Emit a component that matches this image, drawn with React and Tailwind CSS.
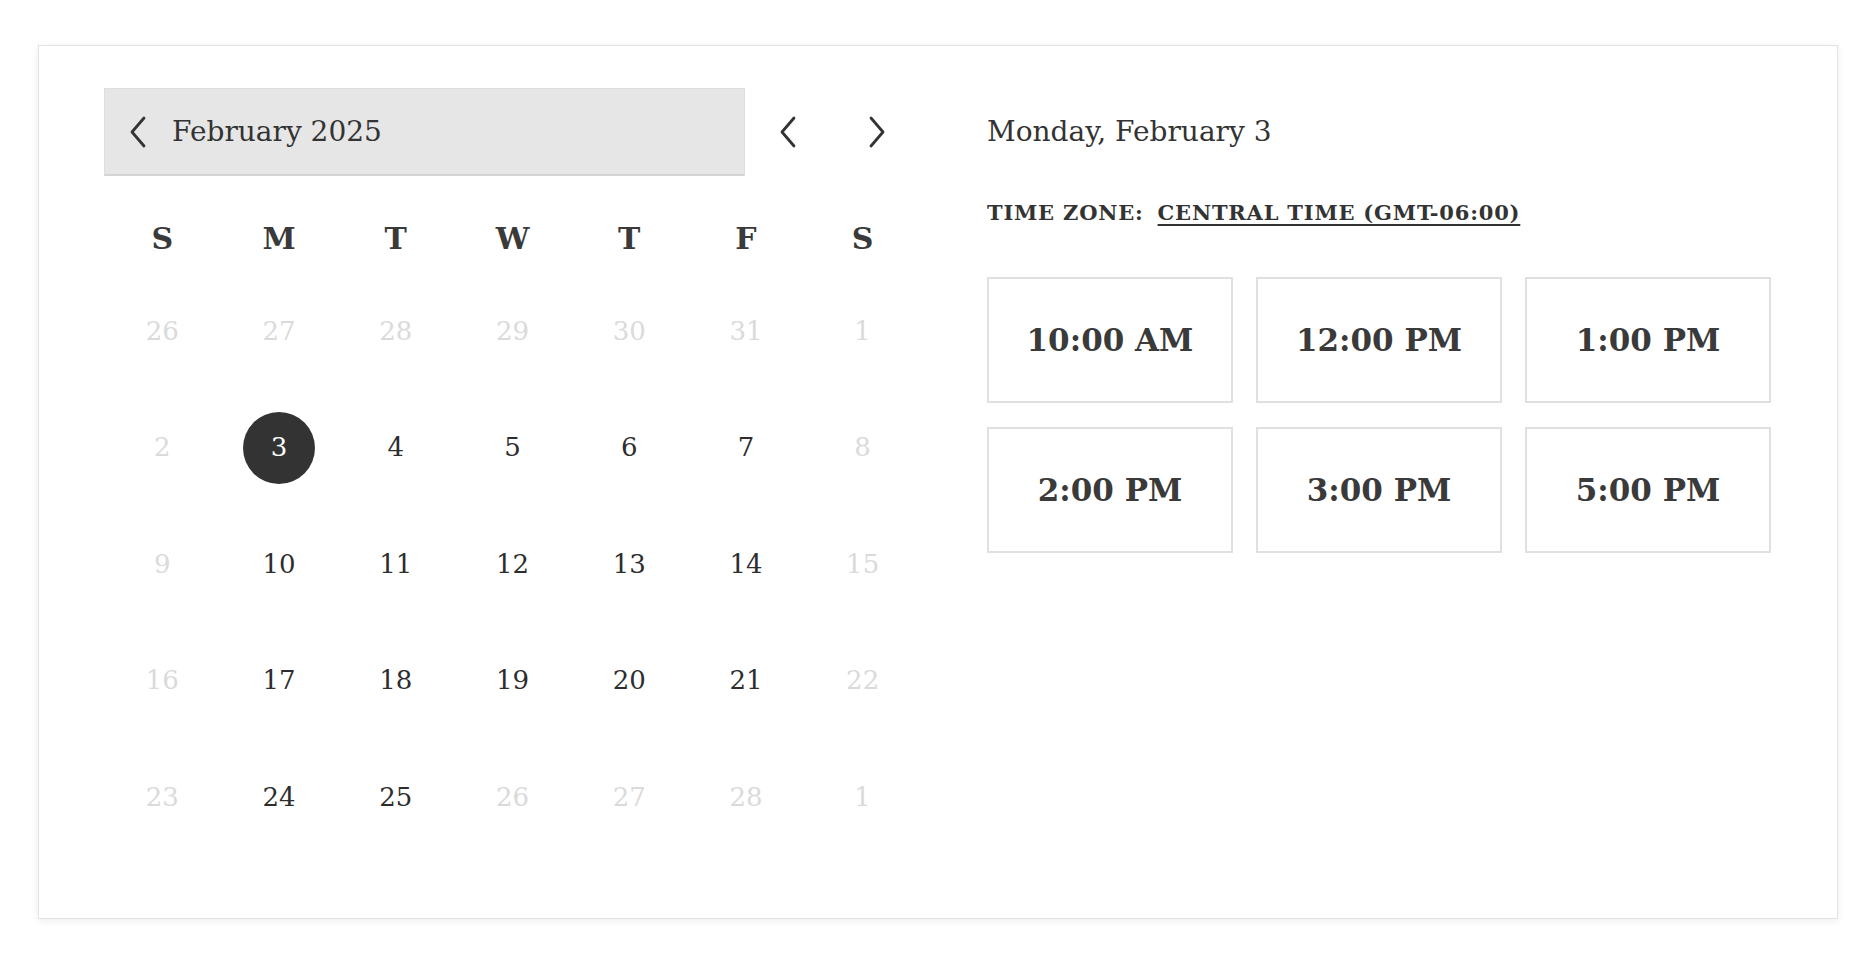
import React from 'react';

const serif = { fontFamily: '"DejaVu Serif", "Liberation Serif", serif' };

function Chevron({ dir = 'left', className = '' }) {
  const d = dir === 'left' ? 'M15 2 L3 16 L15 30' : 'M3 2 L15 16 L3 30';
  return (
    <svg viewBox="0 0 18 32" className={className} fill="none" stroke="#333" strokeWidth="2.8" strokeLinecap="round" strokeLinejoin="round">
      <path d={d} />
    </svg>
  );
}

const weekdays = ['S', 'M', 'T', 'W', 'T', 'F', 'S'];

// each cell: [day, inMonth]
const weeks = [
  [[26, 0], [27, 0], [28, 0], [29, 0], [30, 0], [31, 0], [1, 0]],
  [[2, 0], [3, 1], [4, 1], [5, 1], [6, 1], [7, 1], [8, 0]],
  [[9, 0], [10, 1], [11, 1], [12, 1], [13, 1], [14, 1], [15, 0]],
  [[16, 0], [17, 1], [18, 1], [19, 1], [20, 1], [21, 1], [22, 0]],
  [[23, 0], [24, 1], [25, 1], [26, 0], [27, 0], [28, 0], [1, 0]],
];

const slots = ['10:00 AM', '12:00 PM', '1:00 PM', '2:00 PM', '3:00 PM', '5:00 PM'];

function DayCell({ day, active, selected }) {
  if (selected) {
    return (
      <div className="h-[116.5px] flex items-center justify-center">
        <div className="w-[72px] h-[72px] rounded-full bg-[#333] text-white flex items-center justify-center text-[26px]">{day}</div>
      </div>
    );
  }
  return (
    <div className={`h-[116.5px] flex items-center justify-center text-[26px] ${active ? 'text-[#2d2d2d]' : 'text-[#dadada]'}`}>
      {day}
    </div>
  );
}

export default function App() {
  return (
    <div className="min-h-screen bg-white pt-[45px] pl-[38px]" style={serif}>
      <div className="w-[1800px] h-[874px] bg-white border border-[#e3e3e3] shadow-[0_2px_8px_rgba(0,0,0,0.07)] flex px-[65px] pt-[42px]">
        {/* Calendar */}
        <div className="w-[817px]">
          <div className="flex items-center h-[88px]">
            <div className="w-[641px] h-[88px] bg-[#e6e6e6] border border-[#dedede] border-b-2 border-b-[#d4d4d4] flex items-center pl-[24px]">
              <Chevron className="w-[18px] h-[32px]" />
              <span className="ml-[25px] text-[28px] text-[#333]">February 2025</span>
            </div>
            <button className="ml-[21px] w-[44px] h-[44px] flex items-center justify-center">
              <Chevron className="w-[18px] h-[32px]" />
            </button>
            <button className="ml-[45px] w-[44px] h-[44px] flex items-center justify-center">
              <Chevron dir="right" className="w-[18px] h-[32px]" />
            </button>
          </div>

          <div className="grid grid-cols-7 mt-[32px] h-[60px]">
            {weekdays.map((w, i) => (
              <div key={i} className="flex items-center justify-center text-[30px] font-bold text-[#3a3a3a]">{w}</div>
            ))}
          </div>

          <div className="mt-[5px]">
            {weeks.map((week, wi) => (
              <div key={wi} className="grid grid-cols-7">
                {week.map(([d, m], di) => (
                  <DayCell key={di} day={d} active={m === 1} selected={wi === 1 && di === 1} />
                ))}
              </div>
            ))}
          </div>
        </div>

        {/* Times */}
        <div className="ml-[66px] w-[785px]">
          <div className="h-[88px] flex items-center text-[28px] text-[#333]">Monday, February 3</div>
          <div className="mt-[24px] text-[21px] font-bold text-[#333] tracking-[0.8px] leading-[26px] flex">
            <span>TIME ZONE:</span>
            <span className="ml-[14px] underline decoration-2 underline-offset-[4px]">CENTRAL TIME (GMT-06:00)</span>
          </div>
          <div className="mt-[51px] grid grid-cols-[246px_246px_246px] gap-x-[23px] gap-y-[24px]">
            {slots.map((s) => (
              <div key={s} className="h-[126px] border-2 border-[#e0e0e0] flex items-center justify-center text-[31px] font-bold text-[#3a3a3a]">
                {s}
              </div>
            ))}
          </div>
        </div>
      </div>
    </div>
  );
}
